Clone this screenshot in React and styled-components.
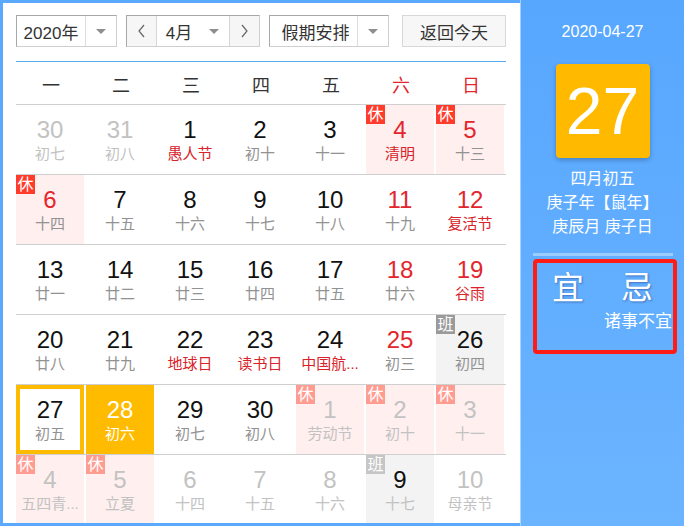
import styled, { createGlobalStyle } from 'styled-components';

const GlobalStyle = createGlobalStyle`
    html, body {
        margin: 0;
        padding: 0;
    }
    body {
        font-family: "Liberation Sans", "Noto Sans CJK SC", sans-serif;
        background: #5aa9ff;
    }
`;

const Page = styled.div`
    width: 684px;
    height: 526px;
    display: flex;
    background: #5aa9ff;
    overflow: hidden;
`;

const LeftPanel = styled.div`
    width: 517px;
    height: 520px;
    margin: 3px 0 3px 3px;
    padding: 12px 14px 0 13px;
    box-sizing: border-box;
    background: #fff;
    overflow: hidden;
`;

const Toolbar = styled.div`
    display: flex;
    align-items: center;
    gap: 9px;
    height: 32px;
`;

const SelectBox = styled.div`
    display: flex;
    width: ${p => p.width}px;
    height: 32px;
    box-sizing: border-box;
    border: 1px solid;
    border-color: #a8a8a8 #cfcfcf #cfcfcf #a8a8a8;
    font-size: 17px;
    color: #333;
`;

const SelectLabel = styled.div`
    flex: 1;
    display: flex;
    align-items: center;
    justify-content: center;
    padding-left: ${p => p.pad || 0}px;
`;

const ArrowBox = styled.div`
    width: 30px;
    display: flex;
    align-items: center;
    justify-content: center;
    border-left: ${p => (p.divider ? '1px solid #ddd' : 'none')};
`;

const Triangle = styled.span`
    width: 0;
    height: 0;
    border-left: 5px solid transparent;
    border-right: 5px solid transparent;
    border-top: 5px solid #8e8e8e;
`;

const StepButton = styled.div`
    width: 29px;
    display: flex;
    align-items: center;
    justify-content: center;
    background: #f6f6f6;
    border-left: ${p => (p.side === 'right' ? '1px solid #d6d6d6' : 'none')};
    border-right: ${p => (p.side === 'left' ? '1px solid #d6d6d6' : 'none')};
`;

const TodayButton = styled.div`
    margin-left: auto;
    width: 104px;
    height: 32px;
    box-sizing: border-box;
    display: flex;
    align-items: center;
    justify-content: center;
    background: #f7f7f7;
    border: 1px solid #d8d8d8;
    font-size: 17px;
    color: #333;
`;

const WeekHeader = styled.div`
    margin-top: 14px;
    display: grid;
    grid-template-columns: repeat(7, 70px);
    height: 42px;
    border-top: 1px solid #5aa9f0;
`;

const WeekDay = styled.div`
    display: flex;
    align-items: center;
    justify-content: center;
    padding-top: 2px;
    font-size: 18px;
    color: ${p => (p.weekend ? '#e3262d' : '#333')};
`;

const Row = styled.div`
    display: grid;
    grid-template-columns: repeat(7, 70px);
    border-top: 1px solid #cfcfcf;
`;

const Cell = styled.div`
    position: relative;
    width: 68px;
    height: 69px;
    box-sizing: border-box;
    padding-top: 11px;
    text-align: center;
    background: ${p => (p.sel ? '#ffbb00' : p.tag === '休' ? '#ffefef' : p.tag === '班' ? '#f3f3f3' : '#fff')};
    box-shadow: ${p => (p.today ? 'inset 0 0 0 4px #ffbb00' : 'none')};
`;

const DayNum = styled.div`
    font-size: 24px;
    line-height: 28px;
    color: ${p => p.color};
`;

const Lunar = styled.div`
    margin-top: 1px;
    font-size: 15px;
    line-height: 18px;
    color: ${p => p.color};
    white-space: nowrap;
`;

const Badge = styled.span`
    position: absolute;
    top: 0;
    left: 0;
    width: 19px;
    height: 19px;
    font-size: 16px;
    line-height: 19px;
    color: #fff;
    text-align: center;
    background: ${p => p.bg};
`;

const RightPanel = styled.div`
    flex: 1;
    display: flex;
    flex-direction: column;
    align-items: center;
    background: linear-gradient(#57a7ff, #6bb4ff);
    border-left: 1px solid rgba(255, 255, 255, 0.45);
    color: #fff;
`;

const DateLine = styled.div`
    margin-top: 22px;
    font-size: 16px;
    line-height: 20px;
`;

const BigDay = styled.div`
    margin-top: 22px;
    width: 94px;
    height: 94px;
    display: flex;
    align-items: center;
    justify-content: center;
    background: #ffba00;
    border-radius: 4px;
    box-shadow: 0 2px 5px rgba(0, 0, 0, 0.25);
    font-size: 66px;
    line-height: 1;
`;

const LunarInfo = styled.div`
    margin-top: 9px;
    text-align: center;
    font-size: 16px;
    line-height: 24px;
`;

const Divider = styled.div`
    align-self: flex-start;
    margin: 14px 0 0 12px;
    width: 140px;
    height: 3px;
    background: rgba(255, 255, 255, 0.38);
`;

const Almanac = styled.div`
    align-self: flex-start;
    margin: 3px 0 0 12px;
    width: 144px;
    height: 95px;
    box-sizing: border-box;
    border: 4px solid #ff1c14;
    border-radius: 4px;
    padding: 7px 1px 0 15px;
`;

const BigWords = styled.div`
    display: flex;
    gap: 37px;
    font-size: 32px;
    line-height: 36px;
    text-shadow: 1px 1px 2px rgba(20, 40, 110, 0.45);
`;

const Avoid = styled.div`
    margin-top: 6px;
    text-align: right;
    font-size: 17px;
    line-height: 20px;
`;

const Chevron = ({ dir }) => (
    <svg width="9" height="14" viewBox="0 0 9 14">
        <polyline
            points={dir === 'left' ? '7,1 2,7 7,13' : '2,1 7,7 2,13'}
            fill="none"
            stroke="#666"
            strokeWidth="1.2"
        />
    </svg>
);

const weeks = ['一', '二', '三', '四', '五', '六', '日'];

// d: day, l: lunar text, o: other month, r: red number, f: festival (red lunar)
const days = [
    { d: 30, l: '初七', o: 1 }, { d: 31, l: '初八', o: 1 }, { d: 1, l: '愚人节', f: 1 },
    { d: 2, l: '初十' }, { d: 3, l: '十一' }, { d: 4, l: '清明', r: 1, f: 1, tag: '休' },
    { d: 5, l: '十三', r: 1, tag: '休' },
    { d: 6, l: '十四', r: 1, tag: '休' }, { d: 7, l: '十五' }, { d: 8, l: '十六' },
    { d: 9, l: '十七' }, { d: 10, l: '十八' }, { d: 11, l: '十九', r: 1 },
    { d: 12, l: '复活节', r: 1, f: 1 },
    { d: 13, l: '廿一' }, { d: 14, l: '廿二' }, { d: 15, l: '廿三' }, { d: 16, l: '廿四' },
    { d: 17, l: '廿五' }, { d: 18, l: '廿六', r: 1 }, { d: 19, l: '谷雨', r: 1, f: 1 },
    { d: 20, l: '廿八' }, { d: 21, l: '廿九' }, { d: 22, l: '地球日', f: 1 },
    { d: 23, l: '读书日', f: 1 }, { d: 24, l: '中国航...', f: 1 }, { d: 25, l: '初三', r: 1 },
    { d: 26, l: '初四', tag: '班' },
    { d: 27, l: '初五', today: 1 }, { d: 28, l: '初六', sel: 1 }, { d: 29, l: '初七' },
    { d: 30, l: '初八' }, { d: 1, l: '劳动节', o: 1, tag: '休' }, { d: 2, l: '初十', o: 1, tag: '休' },
    { d: 3, l: '十一', o: 1, tag: '休' },
    { d: 4, l: '五四青...', o: 1, tag: '休' }, { d: 5, l: '立夏', o: 1, tag: '休' },
    { d: 6, l: '十四', o: 1 }, { d: 7, l: '十五', o: 1 }, { d: 8, l: '十六', o: 1 },
    { d: 9, l: '十七', o: 1, tag: '班' }, { d: 10, l: '母亲节', o: 1 },
];

const numColor = c => {
    if (c.sel) return '#fff';
    if (c.tag === '班') return '#111';
    if (c.o) return '#c2c2c2';
    if (c.r) return '#e3262d';
    return '#111';
};

const lunarColor = c => {
    if (c.sel) return '#fff';
    if (c.o) return '#c2c2c2';
    if (c.f) return '#d9232b';
    return '#929292';
};

const badgeColor = c => {
    if (c.tag === '休') return c.o ? '#ff9c92' : '#ff3b2b';
    return c.o ? '#c6c6c6' : '#9a9a9a';
};

const rows = [0, 1, 2, 3, 4, 5].map(i => days.slice(i * 7, i * 7 + 7));

const App = () => {
    return (
        <Page>
            <GlobalStyle />
            <LeftPanel>
                <Toolbar>
                    <SelectBox width={101}>
                        <SelectLabel>2020年</SelectLabel>
                        <ArrowBox divider><Triangle /></ArrowBox>
                    </SelectBox>
                    <SelectBox width={134}>
                        <StepButton side="left"><Chevron dir="left" /></StepButton>
                        <SelectLabel pad={2}>4月</SelectLabel>
                        <ArrowBox><Triangle /></ArrowBox>
                        <StepButton side="right"><Chevron dir="right" /></StepButton>
                    </SelectBox>
                    <SelectBox width={120}>
                        <SelectLabel pad={4}>假期安排</SelectLabel>
                        <ArrowBox divider><Triangle /></ArrowBox>
                    </SelectBox>
                    <TodayButton>返回今天</TodayButton>
                </Toolbar>
                <WeekHeader>
                    {weeks.map((w, i) => (
                        <WeekDay key={w} weekend={i > 4}>{w}</WeekDay>
                    ))}
                </WeekHeader>
                {rows.map((row, ri) => (
                    <Row key={ri}>
                        {row.map((c, ci) => (
                            <Cell key={ci} tag={c.tag} sel={c.sel} today={c.today}>
                                {c.tag && <Badge bg={badgeColor(c)}>{c.tag}</Badge>}
                                <DayNum color={numColor(c)}>{c.d}</DayNum>
                                <Lunar color={lunarColor(c)}>{c.l}</Lunar>
                            </Cell>
                        ))}
                    </Row>
                ))}
            </LeftPanel>
            <RightPanel>
                <DateLine>2020-04-27</DateLine>
                <BigDay>27</BigDay>
                <LunarInfo>
                    <div>四月初五</div>
                    <div>庚子年【鼠年】</div>
                    <div>庚辰月 庚子日</div>
                </LunarInfo>
                <Divider />
                <Almanac>
                    <BigWords>
                        <span>宜</span>
                        <span>忌</span>
                    </BigWords>
                    <Avoid>诸事不宜</Avoid>
                </Almanac>
            </RightPanel>
        </Page>
    );
};

export default App;
